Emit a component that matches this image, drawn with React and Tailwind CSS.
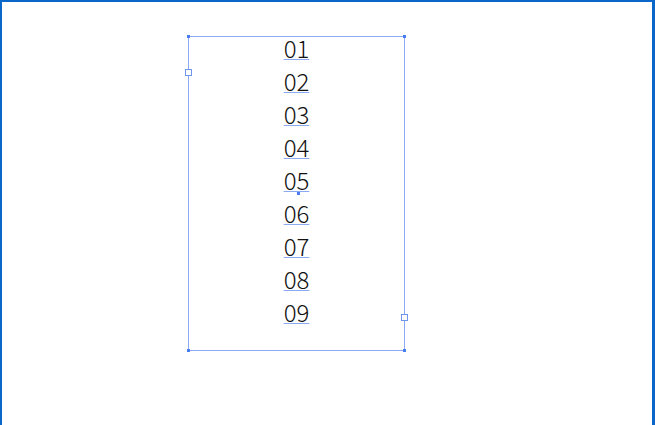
import React from 'react'

const ITEMS = ['01', '02', '03', '04', '05', '06', '07', '08', '09']

export default function App() {
  return (
    <div className="w-[655px] h-[425px] bg-white overflow-hidden">
      <div className="relative w-[655px] h-[440px] border-l-2 border-t-2 border-r-[3px] border-[#0a66c8]">
        {/* selected text frame */}
        <div className="absolute left-[186px] top-[34px] w-[217px] h-[315px] border border-[#8aaaf5]">
          <div className="flex flex-col items-center -mt-[6px] font-['Noto_Sans_CJK_JP','Noto_Sans',sans-serif] font-extralight text-[24px] leading-[33px] text-[#111]">
            {ITEMS.map((n) => (
              <span key={n} className="underline decoration-[#8aa9f0] decoration-1 underline-offset-[1px]">{n}</span>
            ))}
          </div>

          {/* corner points */}
          <span className="absolute -left-[2px] -top-[2px] w-[3px] h-[3px] bg-[#4a7ef0]" />
          <span className="absolute -right-[2px] -top-[2px] w-[3px] h-[3px] bg-[#4a7ef0]" />
          <span className="absolute -left-[2px] -bottom-[2px] w-[3px] h-[3px] bg-[#4a7ef0]" />
          <span className="absolute -right-[2px] -bottom-[2px] w-[3px] h-[3px] bg-[#4a7ef0]" />

          {/* handles */}
          <span className="absolute -left-[4px] top-[32px] w-[7px] h-[7px] bg-white border border-[#6f94ee]" />
          <span className="absolute -right-[4px] top-[277px] w-[7px] h-[7px] bg-white border border-[#6f94ee]" />

          {/* center point */}
          <span className="absolute left-[108px] top-[155px] w-[3px] h-[3px] bg-[#4a7ef0]" />
        </div>
      </div>
    </div>
  )
}
